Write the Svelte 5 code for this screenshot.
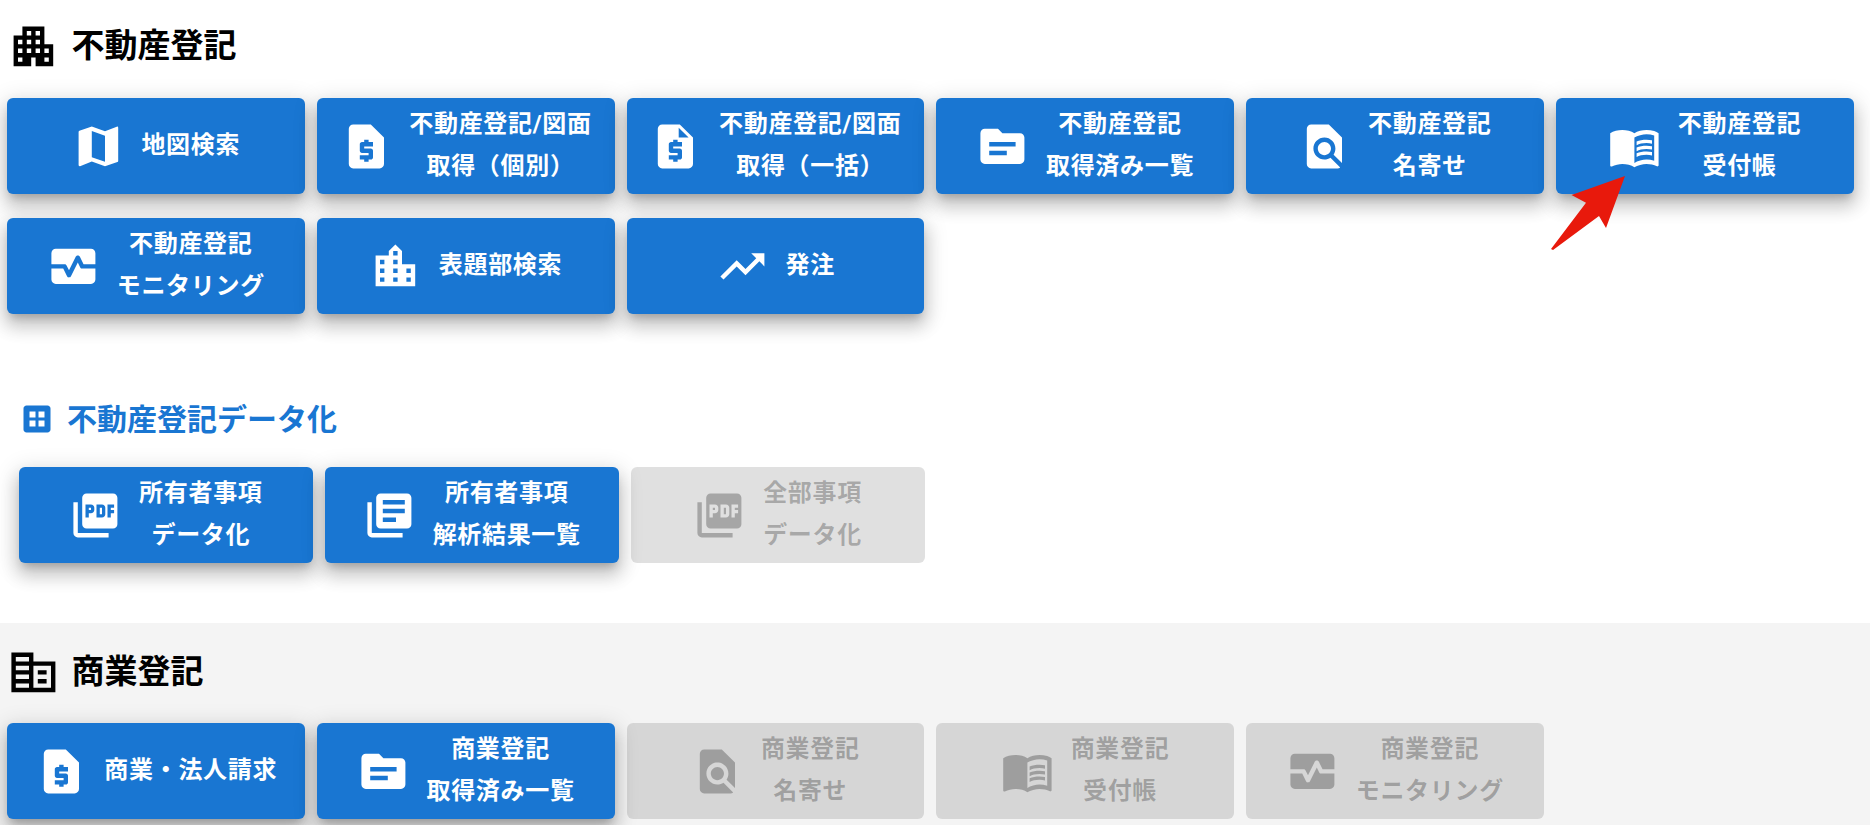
<script>
  // アイコンは Material Icons の filled パス
  const d = {
    map: 'M20.5 3l-.16.03L15 5.1 9 3 3.36 4.9c-.21.07-.36.25-.36.48V20.5c0 .28.22.5.5.5l.16-.03L9 18.9l6 2.1 5.64-1.9c.21-.07.36-.25.36-.48V3.5c0-.28-.22-.5-.5-.5zM15 19l-6-2.11V5l6 2.11V19z',
    page: 'M14 2H6c-1.1 0-2 .9-2 2v16c0 1.1.9 2 2 2h12c1.1 0 2-.9 2-2V8l-6-6zm1 10h-4v1h3c.55 0 1 .45 1 1v3c0 .55-.45 1-1 1h-1v1h-2v-1H9v-2h4v-1h-3c-.55 0-1-.45-1-1v-3c0-.55.45-1 1-1h1V9h2v1h2v2z',
    quote: 'M14 2H6c-1.1 0-2 .9-2 2v16c0 1.1.9 2 2 2h12c1.1 0 2-.9 2-2V8l-6-6zm1 10h-4v1h3c.55 0 1 .45 1 1v3c0 .55-.45 1-1 1h-1v1h-2v-1H9v-2h4v-1h-3c-.55 0-1-.45-1-1v-3c0-.55.45-1 1-1h1V9h2v1h2v2zm-1.5-4V3.5L18 8h-4.5z',
    topic: 'M20 6h-8l-2-2H4c-1.1 0-1.99.9-1.99 2L2 18c0 1.1.9 2 2 2h16c1.1 0 2-.9 2-2V8c0-1.1-.9-2-2-2zm-6 10H6v-2h8v2zm4-4H6v-2h12v2z',
    find: 'M20 19.59V8l-6-6H6c-1.1 0-1.99.9-1.99 2L4 20c0 1.1.89 2 1.99 2H18c.45 0 .85-.15 1.19-.4l-4.43-4.43c-.8.52-1.74.83-2.76.83-2.76 0-5-2.24-5-5s2.24-5 5-5 5 2.24 5 5c0 1.02-.31 1.96-.83 2.75L20 19.59zM9 13c0 1.66 1.34 3 3 3s3-1.34 3-3-1.34-3-3-3-3 1.34-3 3z',
    book: 'M21 5c-1.11-.35-2.33-.5-3.5-.5-1.95 0-4.05.4-5.5 1.5-1.45-1.1-3.55-1.5-5.5-1.5S2.45 4.9 1 6v14.65c0 .25.25.5.5.5.1 0 .15-.05.25-.05C3.1 20.45 5.05 20 6.5 20c1.95 0 4.05.4 5.5 1.5 1.35-.85 3.8-1.5 5.5-1.5 1.65 0 3.35.3 4.75 1.05.1.05.15.05.25.05.25 0 .5-.25.5-.5V6c-.6-.45-1.25-.75-2-1zm0 13.5c-1.1-.35-2.3-.5-3.5-.5-1.7 0-4.15.65-5.5 1.5V8c1.35-.85 3.8-1.5 5.5-1.5 1.2 0 2.4.15 3.5.5v11.5z M17.5 10.5c.88 0 1.73.09 2.5.26V9.24c-.79-.15-1.64-.24-2.5-.24-1.7 0-3.24.29-4.5.83v1.66c1.13-.64 2.7-.99 4.5-.99zM13 12.49v1.66c1.13-.64 2.7-.99 4.5-.99.88 0 1.73.09 2.5.26V11.9c-.79-.15-1.64-.24-2.5-.24-1.7 0-3.24.3-4.5.83zm4.5 1.84c-1.7 0-3.24.29-4.5.83v1.66c1.13-.64 2.7-.99 4.5-.99.88 0 1.73.09 2.5.26v-1.52c-.79-.16-1.64-.24-2.5-.24z',
    heart: 'M15.11 12.45 14 10.24l-3.11 6.21c-.16.34-.51.55-.89.55s-.73-.21-.89-.55L7.38 13H2v5c0 1.1.9 2 2 2h16c1.1 0 2-.9 2-2v-5h-6c-.38 0-.73-.21-.89-.55z M20 4H4c-1.1 0-2 .9-2 2v5h6c.38 0 .73.21.89.55L10 13.76l3.11-6.21c.34-.68 1.45-.68 1.79 0L16.62 11H22V6c0-1.1-.9-2-2-2z',
    city: 'M15 11V5l-3-3-3 3v2H3v14h18V11h-6zm-8 8H5v-2h2v2zm0-4H5v-2h2v2zm0-4H5V9h2v2zm6 8h-2v-2h2v2zm0-4h-2v-2h2v2zm0-4h-2V9h2v2zm0-4h-2V5h2v2zm6 12h-2v-2h2v2zm0-4h-2v-2h2v2z',
    trend: 'M16 6l2.29 2.29-4.88 4.88-4-4L2 16.59 3.41 18l6-6 4 4 6.3-6.29L22 12V6z',
    pdf: 'M20 2H8c-1.1 0-2 .9-2 2v12c0 1.1.9 2 2 2h12c1.1 0 2-.9 2-2V4c0-1.1-.9-2-2-2zm-8.5 7.5c0 .83-.67 1.5-1.5 1.5H9v2H7.5V7H10c.83 0 1.5.67 1.5 1.5v1zm5 2c0 .83-.67 1.5-1.5 1.5h-2.5V7H15c.83 0 1.5.67 1.5 1.5v3zm4-3H19v1h1.5V11H19v2h-1.5V7h3v1.5zM9 9.5h1v-1H9v1zM4 6H2v14c0 1.1.9 2 2 2h14v-2H4V6zm10 5.5h1v-3h-1v3z',
    books: 'M4 6H2v14c0 1.1.9 2 2 2h14v-2H4V6zm16-4H8c-1.1 0-2 .9-2 2v12c0 1.1.9 2 2 2h12c1.1 0 2-.9 2-2V4c0-1.1-.9-2-2-2zm-1 9H9V9h10v2zm-4 4H9v-2h6v2zm4-8H9V5h10v2z',
    apartment: 'M17 11V3H7v4H3v14h8v-4h2v4h8V11h-4zM7 19H5v-2h2v2zm0-4H5v-2h2v2zm0-4H5V9h2v2zm4 4H9v-2h2v2zm0-4H9V9h2v2zm0-4H9V5h2v2zm4 8h-2v-2h2v2zm0-4h-2V9h2v2zm0-4h-2V5h2v2zm4 12h-2v-2h2v2zm0-4h-2v-2h2v2z',
    fare: 'M12 7V3H2v18h20V7H12zm-2 12H4v-2h6v2zm0-4H4v-2h6v2zm0-4H4V9h6v2zm0-4H4V5h6v2zm10 12h-8V9h8v10zm-2-8h-4v2h4v-2zm0 4h-4v2h4v-2z',
    grid: 'M5 3h14c1.1 0 2 .9 2 2v14c0 1.1-.9 2-2 2H5c-1.1 0-2-.9-2-2V5c0-1.1.9-2 2-2zm2 4v4h4V7H7zm6 0v4h4V7h-4zm-6 6v4h4v-4H7zm6 0v4h4v-4h-4z',
  };

  const fudosan = [
    { icon: 'map', lines: ['地図検索'] },
    { icon: 'page', lines: ['不動産登記/図面', '取得（個別）'] },
    { icon: 'quote', lines: ['不動産登記/図面', '取得（一括）'] },
    { icon: 'topic', lines: ['不動産登記', '取得済み一覧'] },
    { icon: 'find', lines: ['不動産登記', '名寄せ'] },
    { icon: 'book', lines: ['不動産登記', '受付帳'] },
    { icon: 'heart', lines: ['不動産登記', 'モニタリング'] },
    { icon: 'city', lines: ['表題部検索'] },
    { icon: 'trend', lines: ['発注'] },
  ];
  const dataka = [
    { icon: 'pdf', lines: ['所有者事項', 'データ化'] },
    { icon: 'books', lines: ['所有者事項', '解析結果一覧'] },
    { icon: 'pdf', lines: ['全部事項', 'データ化'], off: true },
  ];
  const shogyo = [
    { icon: 'page', lines: ['商業・法人請求'] },
    { icon: 'topic', lines: ['商業登記', '取得済み一覧'] },
    { icon: 'find', lines: ['商業登記', '名寄せ'], off: true },
    { icon: 'book', lines: ['商業登記', '受付帳'], off: true },
    { icon: 'heart', lines: ['商業登記', 'モニタリング'], off: true },
  ];
</script>

{#snippet boton(b)}
  <button class="btn" class:off={b.off} disabled={b.off}>
    <svg class="ico" viewBox="0 0 24 24"><path d={d[b.icon]} /></svg>
    <span class="txt">
      {#each b.lines as l}<span class="ln">{l}</span>{/each}
    </span>
  </button>
{/snippet}

<main class="page">
  <section class="sec sec--top">
    <h2 class="head">
      <svg class="ico" viewBox="0 0 24 24"><path d={d.apartment} /></svg>
      <span class="tt">不動産登記</span>
    </h2>
    <div class="grid">
      {#each fudosan as b}{@render boton(b)}{/each}
      <svg class="arrow" viewBox="0 0 80 80" aria-hidden="true">
        <polygon points="76,1 22.5,20 37,27.7 2,74 4,75 50,41 57,53" />
      </svg>
    </div>

    <h3 class="sub">
      <svg class="ico" viewBox="0 0 24 24"><path d={d.grid} /></svg>
      <span class="tt-sub">不動産登記データ化</span>
    </h3>
    <div class="grid grid--3">
      {#each dataka as b}{@render boton(b)}{/each}
    </div>
  </section>

  <section class="sec sec--gris">
    <h2 class="head">
      <svg class="ico" viewBox="0 0 24 24"><path d={d.fare} /></svg>
      <span class="tt">商業登記</span>
    </h2>
    <div class="grid">
      {#each shogyo as b}{@render boton(b)}{/each}
    </div>
  </section>
</main>

<style>
  :global(body) { background: #fff; }
  .page {
    height: 825px; overflow: hidden;
    font-family: Roboto, "Noto Sans CJK JP", sans-serif;
  }
  .sec--top { padding-top: 20px; height: 623px; box-sizing: border-box; }
  .sec--gris { background: #f4f4f4; padding-top: 23px; height: 202px; box-sizing: border-box; }
  .sec--gris .head { margin-bottom: 24px; }
  .ico { fill: currentColor; flex: none; display: block; }

  .head {
    display: flex; align-items: center; gap: 12px;
    margin: 0 0 25px 6.6px; height: 53px;
    font-size: 33px; font-weight: 700; color: #000;
  }
  .head .ico { width: 52.8px; height: 52.8px; }
  .tt { margin-bottom: 8px; }

  .sub {
    display: flex; align-items: center; gap: 12px;
    margin: 87px 0 30px 19px; height: 36px;
    font-size: 30px; font-weight: 700; color: #1976d2;
  }
  .sub .ico { width: 36px; height: 36px; }
  .tt-sub { margin-bottom: 5px; }

  .grid {
    position: relative;
    display: grid; grid-template-columns: repeat(6, 1fr); gap: 24px 12px;
    padding: 0 16.5px 0 7px;
  }
  .grid--3 { grid-template-columns: repeat(3, 1fr); width: 905.6px; padding: 0 0 0 19px; }

  .btn {
    display: flex; align-items: center; justify-content: center; gap: 17px;
    height: 96px; padding: 0; border: none; border-radius: 6px;
    background: #1976d2; color: #fff;
    font: inherit; font-size: 24px; font-weight: 700; line-height: 42px; letter-spacing: 0.02857em;
    box-shadow: 0 7px 8px -4px rgba(0,0,0,.2), 0 12px 17px 2px rgba(0,0,0,.14), 0 5px 22px 4px rgba(0,0,0,.12);
  }
  .btn .ico { width: 52.8px; height: 52.8px; }
  .btn.off { background: rgba(0,0,0,.12); color: rgba(0,0,0,.26); box-shadow: none; }
  .txt { display: flex; flex-direction: column; align-items: center; white-space: nowrap; margin-bottom: 2px; }
  .ln { display: block; }

  /* 受付帳ボタンを指す注釈の矢印 */
  .arrow { position: absolute; left: 1549px; top: 77px; width: 80px; height: 80px; z-index: 2; }
  .arrow polygon { fill: #e8190c; }
</style>
